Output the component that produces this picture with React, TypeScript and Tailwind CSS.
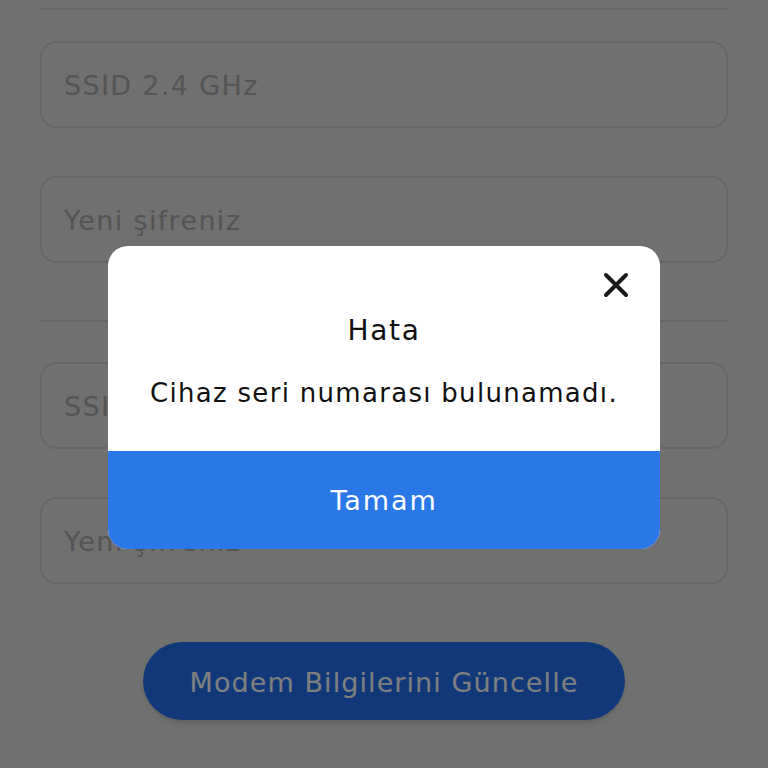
import { X } from 'lucide-react';

// 1. DATA
const fields = [
  { label: 'SSID 2.4 GHz' },
  { label: 'Yeni şifreniz' },
];
const fields5 = [
  { label: 'SSID 5 GHz' },
  { label: 'Yeni şifreniz' },
];

function Field({ label }: { label: string }) {
  return (
    <div className="h-[87px] rounded-2xl border-2 border-[#cccccc] flex items-center px-[22px] pt-1">
      <span className="text-[27px] text-[#a8a8a8] tracking-[0.05em]">{label}</span>
    </div>
  );
}

// 2. COMPONENT
export default function App() {
  return (
    <div
      className="relative w-[768px] h-[768px] overflow-hidden bg-[#e0e0e0]"
      style={{ fontFamily: '"DejaVu Sans", "Noto Sans", sans-serif' }}
    >
      {/* Form */}
      <div className="px-10 flex flex-col">
        <div className="h-[2px] bg-[#cccccc] mt-2" />
        <div className="flex flex-col gap-[48px] mt-[31px]">
          {fields.map((f, i) => (
            <Field key={i} label={f.label} />
          ))}
        </div>
        <div className="h-[2px] bg-[#cccccc] mt-[57px]" />
        <div className="flex flex-col gap-[48px] mt-[40px]">
          {fields5.map((f, i) => (
            <Field key={i} label={f.label} />
          ))}
        </div>
        <div className="flex justify-center mt-[58px]">
          <button className="w-[482px] h-[78px] rounded-full bg-[#2272f4] text-white text-[27px] tracking-[0.04em] pt-1 shadow-md">
            Modem Bilgilerini Güncelle
          </button>
        </div>
      </div>

      {/* Overlay */}
      <div className="absolute inset-0 bg-black/50" />

      {/* Dialog */}
      <div className="absolute left-[108px] top-[246px] w-[552px] rounded-[20px] overflow-hidden bg-white flex flex-col">
        <div className="relative h-[205px] flex flex-col items-center">
          <button className="absolute right-[24px] top-[19px] text-[#1a1a1a]">
            <X size={40} strokeWidth={2.4} />
          </button>
          <h2 className="mt-[64px] text-[28px] text-[#111] tracking-[0.06em]">Hata</h2>
          <p className="mt-[22px] text-[26px] text-[#111] tracking-[0.05em]">Cihaz seri numarası bulunamadı.</p>
        </div>
        <button className="h-[98px] bg-[#2a77e8] text-white text-[27px] tracking-[0.07em] pt-[2px]">
          Tamam
        </button>
      </div>
    </div>
  );
}
